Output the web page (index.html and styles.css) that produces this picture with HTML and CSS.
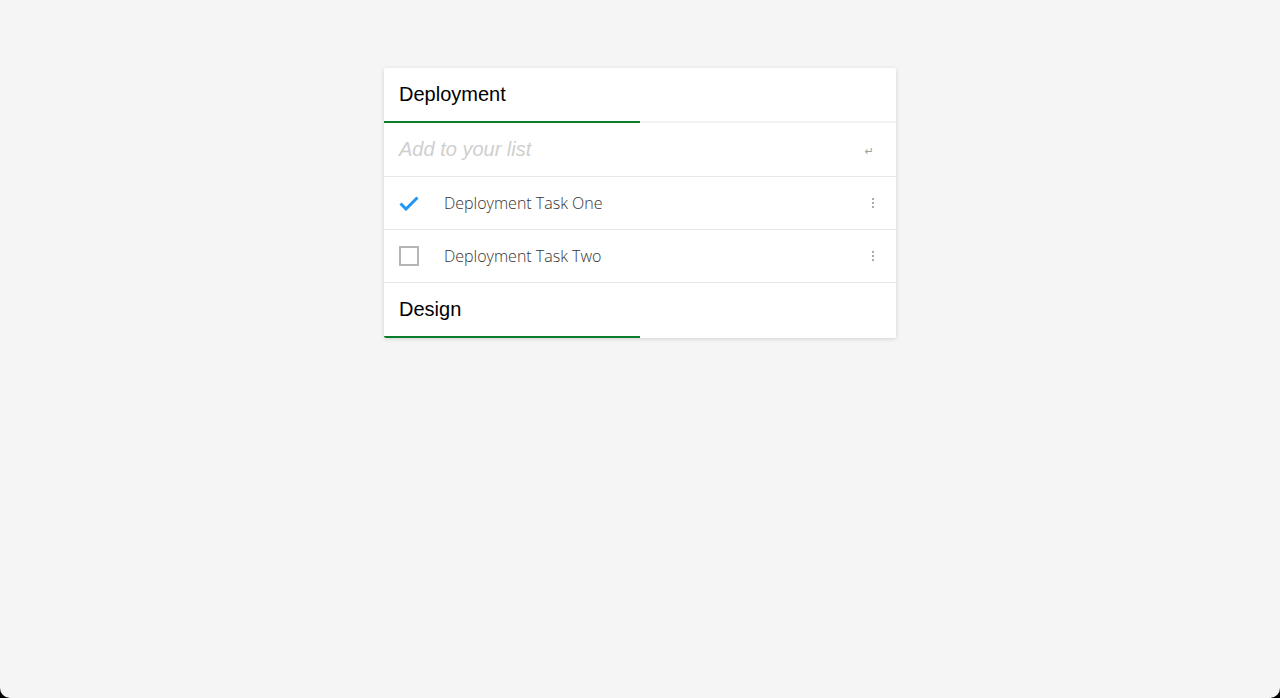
FILE: index.html
```html
<!DOCTYPE html>
<html>
<head>
<meta charset="utf-8">
<link rel="stylesheet" href="styles.css">
</head>
<body>
<div class="page">
  <div class="card">
    <div class="tab-header"><span class="tab-title">Deployment</span></div>
    <div class="add-row">
      <span class="placeholder">Add to your list</span>
      <span class="enter">&#8629;</span>
    </div>
    <div class="task">
      <span class="check">
        <svg width="20" height="16" viewBox="0 0 20 16"><path d="M1.5 8.5 L7 14 L18.5 2.5" fill="none" stroke="#2196f3" stroke-width="3"/></svg>
      </span>
      <span class="task-text">Deployment Task One</span>
      <span class="kebab"><i></i><i></i><i></i></span>
    </div>
    <div class="task">
      <span class="check"><span class="box"></span></span>
      <span class="task-text">Deployment Task Two</span>
      <span class="kebab"><i></i><i></i><i></i></span>
    </div>
    <div class="tab-header last"><span class="tab-title">Design</span></div>
  </div>
</div>
</body>
</html>
```

FILE: styles.css
```css
html { background: #000; }
body {
  margin: 0;
  height: 698px;
  background: #f5f5f5;
  border-radius: 0 0 10px 10px;
  font-family: "Liberation Sans", Arial, sans-serif;
}
.page {
  display: flex;
  justify-content: center;
  padding-top: 68px;
}
.card {
  width: 512px;
  background: #fff;
  border-radius: 2px;
  box-shadow: 0 1px 4px rgba(0,0,0,0.15);
  overflow: hidden;
}
.tab-header {
  height: 53px;
  display: flex;
  align-items: center;
  padding-left: 15px;
  border-bottom: 2px solid #f2f2f2;
  position: relative;
}
.tab-header::after {
  content: "";
  position: absolute;
  left: 0;
  bottom: -2px;
  width: 256px;
  height: 2px;
  background: #0b7d2a;
}
.tab-header.last { border-bottom-color: #fff; }
.tab-title {
  font-size: 20px;
  color: #000;
}
.add-row {
  height: 53px;
  display: flex;
  align-items: center;
  padding: 0 22px 0 15px;
  border-bottom: 1px solid #e8e8e8;
}
.placeholder {
  flex: 1;
  font-size: 20px;
  font-style: italic;
  color: #cfcfcf;
}
.enter {
  font-family: "DejaVu Sans", sans-serif;
  font-size: 11px;
  color: #a0a0a0;
  margin-top: 4px;
}
.task {
  height: 52px;
  display: flex;
  align-items: center;
  padding: 0 20px 0 15px;
  border-bottom: 1px solid #e8e8e8;
}
.check {
  width: 45px;
  display: flex;
  align-items: center;
}
.box {
  width: 16px;
  height: 16px;
  border: 2px solid #b5b5b5;
}
.task-text {
  flex: 1;
  font-family: "Open Sans", sans-serif;
  font-weight: 300;
  font-size: 16px;
  color: #333;
}
.kebab {
  display: flex;
  flex-direction: column;
  gap: 2px;
  width: 3px;
  margin-right: 1px;
}
.kebab i {
  display: block;
  width: 2px;
  height: 2px;
  background: #aaa;
}
```
